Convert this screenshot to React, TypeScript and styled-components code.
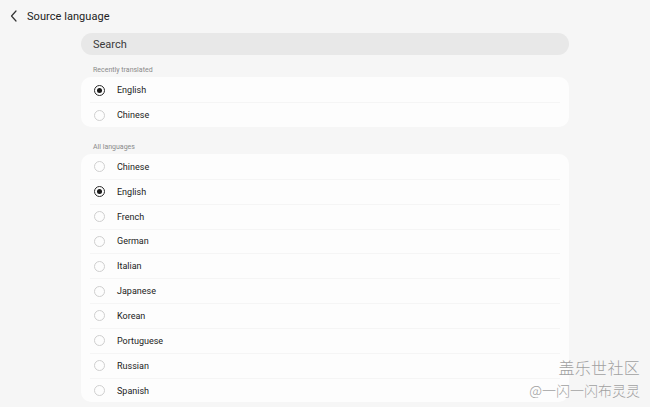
import React from "react";
import styled, { createGlobalStyle } from "styled-components";

const Global = createGlobalStyle`
  html, body { margin: 0; padding: 0; background: #f6f6f6; }
  body { font-family: Roboto, "Noto Sans", "Liberation Sans", sans-serif; color: #1f1f1f; }
`;

const Page = styled.div`
  position: relative;
  width: 650px;
  height: 407px;
  overflow: hidden;
  background: #f6f6f6;
`;

const Header = styled.div`
  display: flex;
  align-items: center;
  gap: 7px;
  height: 32px;
  padding-left: 10px;
`;

const BackButton = styled.span`
  display: flex;
  align-items: center;
  width: 10px;
  height: 14px;
`;

const Title = styled.h1`
  margin: 0;
  font-size: 11px;
  font-weight: 400;
  color: #222;
  letter-spacing: 0.05px;
`;

const Content = styled.div`
  display: flex;
  flex-direction: column;
  padding: 1px 81px 0 81px;
`;

const SearchBar = styled.div`
  display: flex;
  align-items: center;
  height: 22px;
  border-radius: 11px;
  background: #e8e8e8;
  padding-left: 12px;
  font-size: 11px;
  color: #3a3a3a;
`;

const SectionLabel = styled.div<{ $top: number }>`
  margin-top: ${(p) => p.$top}px;
  height: 14px;
  line-height: 14px;
  padding-left: 12px;
  font-size: 7px;
  color: #8a8a8a;
`;

const Card = styled.div`
  background: #fdfdfd;
  border-radius: 10px;
  overflow: hidden;
`;

const Row = styled.div<{ $h: number }>`
  position: relative;
  display: flex;
  align-items: center;
  height: ${(p) => p.$h}px;
  padding: 1px 0 0 13px;
  box-sizing: border-box;
  gap: 12px;
  font-size: 9px;
  color: #222;
  & + &::before {
    content: "";
    position: absolute;
    top: 0;
    left: 9px;
    right: 9px;
    height: 1px;
    background: #f5f5f5;
  }
`;

const Radio = styled.span<{ $checked: boolean }>`
  box-sizing: border-box;
  width: 11px;
  height: 11px;
  border-radius: 50%;
  border: 1px solid ${(p) => (p.$checked ? "#2a2a2a" : "#cfcfcf")};
  display: flex;
  align-items: center;
  justify-content: center;
  &::after {
    content: "";
    width: 5px;
    height: 5px;
    border-radius: 50%;
    background: ${(p) => (p.$checked ? "#1a1a1a" : "transparent")};
  }
`;

const Watermark = styled.div`
  position: absolute;
  right: 10px;
  bottom: 10px;
  display: flex;
  flex-direction: column;
  align-items: flex-end;
  gap: 8px;
  font-family: "Noto Sans CJK SC", sans-serif;
  font-weight: 300;
  color: #a0a0a0;
  line-height: 1;
  text-shadow: 0 0 1px #ffffff;
`;

const WmTop = styled.span`
  font-size: 16px;
  letter-spacing: 0.3px;
`;

const WmBottom = styled.span`
  font-size: 14px;
`;

const recent = [
  { name: "English", checked: true },
  { name: "Chinese", checked: false },
];

const all = [
  "Chinese",
  "English",
  "French",
  "German",
  "Italian",
  "Japanese",
  "Korean",
  "Portuguese",
  "Russian",
  "Spanish",
];

export default function App() {
  return (
    <Page>
      <Global />
      <Header>
        <BackButton>
          <svg width="8" height="12" viewBox="0 0 8 12" fill="none">
            <path d="M6 1 L1.5 6 L6 11" stroke="#333" strokeWidth="1.2" strokeLinecap="round" strokeLinejoin="round" />
          </svg>
        </BackButton>
        <Title>Source language</Title>
      </Header>
      <Content>
        <SearchBar>Search</SearchBar>
        <SectionLabel $top={8}>Recently translated</SectionLabel>
        <Card>
          {recent.map((r) => (
            <Row key={r.name} $h={25}>
              <Radio $checked={r.checked} />
              {r.name}
            </Row>
          ))}
        </Card>
        <SectionLabel $top={13}>All languages</SectionLabel>
        <Card>
          {all.map((n) => (
            <Row key={n} $h={24.85}>
              <Radio $checked={n === "English"} />
              {n}
            </Row>
          ))}
        </Card>
      </Content>
      <Watermark>
        <WmTop>盖乐世社区</WmTop>
        <WmBottom>@一闪一闪布灵灵</WmBottom>
      </Watermark>
    </Page>
  );
}
